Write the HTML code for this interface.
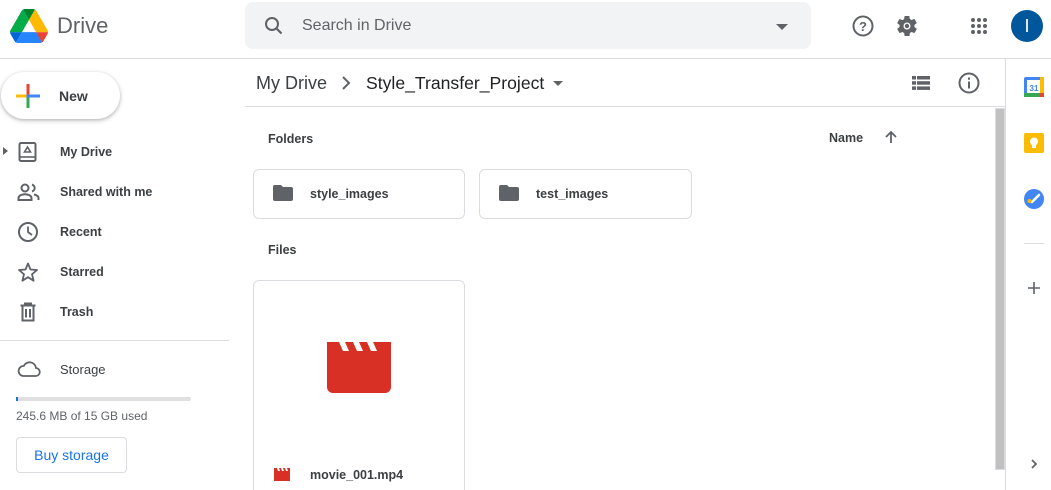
<!DOCTYPE html>
<html><head><meta charset="utf-8"><style>
*{box-sizing:border-box;margin:0;padding:0}
html,body{width:1051px;height:490px;overflow:hidden}
body{background:#fff;font-family:"Liberation Sans",Arial,sans-serif;color:#3c4043;position:relative}
.a{position:absolute}
.nav{position:absolute;left:60px;font-size:12.5px;font-weight:bold;color:#3c4043}
.ic{position:absolute;left:17px}
.card{position:absolute;border:1px solid #dadce0;border-radius:6px;background:#fff}
.b{font-size:12.5px;font-weight:bold;color:#3c4043}
</style></head><body>
<svg class="a" style="left:10px;top:9px" width="38" height="34" viewBox="0 0 87.3 78"><path d="M6.6 66.85l3.85 6.65c.8 1.4 1.950 2.5 3.3 3.3L27.5 53H0c0 1.55.4 3.1 1.2 4.5z" fill="#0066da"/><path d="M43.65 25L29.9 1.2c-1.35.8-2.5 1.9-3.3 3.3l-25.4 44A9.06 9.06 0 000 53h27.5z" fill="#00ac47"/><path d="M73.55 76.8c1.35-.8 2.5-1.9 3.3-3.3l1.6-2.75 7.650-13.25c.8-1.4 1.2-2.95 1.2-4.5H59.8l5.85 11.5z" fill="#ea4335"/><path d="M43.65 25L57.4 1.2C56.05.4 54.5 0 52.9 0H34.4c-1.6 0-3.15.45-4.5 1.2z" fill="#00832d"/><path d="M59.8 53H27.5L13.75 76.8c1.35.8 2.9 1.2 4.5 1.2h50.8c1.6 0 3.15-.45 4.5-1.2z" fill="#2684fc"/><path d="M73.4 26.5l-12.7-22c-.8-1.4-1.95-2.5-3.3-3.3L43.65 25 59.8 53h27.45c0-1.55-.4-3.1-1.2-4.5z" fill="#ffba00"/></svg>
<div class="a" style="left:57px;top:13px;font-size:22px;color:#5f6368">Drive</div>
<div class="a" style="left:245px;top:2px;width:566px;height:47px;background:#f1f3f4;border-radius:8px"></div>
<svg class="a" style="left:262px;top:14px" width="24" height="24" viewBox="0 0 24 24"><circle cx="10" cy="10" r="6" fill="none" stroke="#5f6368" stroke-width="2"/><path d="M14.5 14.5l5 5" stroke="#5f6368" stroke-width="2.2"/></svg>
<div class="a" style="left:302px;top:17px;font-size:16px;color:#5f6368">Search in Drive</div>
<div class="a" style="left:776px;top:24px;border-left:6px solid transparent;border-right:6px solid transparent;border-top:6px solid #5f6368"></div>
<svg class="a" style="left:851px;top:14px" width="24" height="24" viewBox="0 0 24 24"><circle cx="12" cy="12" r="9.5" fill="none" stroke="#5f6368" stroke-width="2"/><text x="12" y="17" font-size="13" font-weight="bold" text-anchor="middle" fill="#5f6368" font-family="Liberation Sans">?</text></svg>
<svg class="a" style="left:895px;top:14px" width="24" height="24" viewBox="0 0 24 24"><path fill="#5f6368" d="M19.4 13c.04-.3.06-.6.06-1s-.02-.7-.06-1l2.1-1.65a.5.5 0 00.12-.64l-2-3.46a.5.5 0 00-.6-.22l-2.5 1a7.3 7.3 0 00-1.7-1l-.37-2.65A.5.5 0 0014 2h-4a.5.5 0 00-.5.42l-.37 2.65c-.6.25-1.17.6-1.7 1l-2.5-1a.5.5 0 00-.6.22l-2 3.46a.5.5 0 00.12.64L4.56 11c-.04.3-.06.66-.06 1s.02.7.06 1l-2.1 1.65a.5.5 0 00-.12.64l2 3.46c.12.22.38.3.6.22l2.5-1c.52.4 1.08.73 1.7 1l.37 2.65c.04.24.25.42.5.42h4c.25 0 .46-.18.5-.42l.37-2.65c.6-.25 1.17-.6 1.7-1l2.5 1c.22.08.48 0 .6-.22l2-3.46a.5.5 0 00-.12-.64zM12 15.5a3.5 3.5 0 110-7 3.5 3.5 0 010 7z"/><circle cx="12" cy="12" r="2.2" fill="#5f6368"/></svg>
<svg class="a" style="left:969px;top:16px" width="20" height="20" viewBox="0 0 20 20" fill="#5f6368"><circle cx="4" cy="4" r="2"/><circle cx="10" cy="4" r="2"/><circle cx="16" cy="4" r="2"/><circle cx="4" cy="10" r="2"/><circle cx="10" cy="10" r="2"/><circle cx="16" cy="10" r="2"/><circle cx="4" cy="16" r="2"/><circle cx="10" cy="16" r="2"/><circle cx="16" cy="16" r="2"/></svg>
<div class="a" style="left:1011px;top:10px;width:32px;height:32px;border-radius:50%;background:#01579b;color:#fff;font-size:18px;text-align:center;line-height:32px">I</div>
<div class="a" style="left:0;top:58px;width:1051px;height:1px;background:#dadce0"></div>
<div class="a" style="left:1px;top:72px;width:119px;height:47px;border-radius:24px;background:#fff;box-shadow:0 1px 3px rgba(60,64,67,.3),0 2px 6px rgba(60,64,67,.15)"></div>
<svg class="a" style="left:16px;top:84px" width="24" height="24" viewBox="0 0 24 24"><rect x="10.5" y="0" width="3" height="10.5" fill="#ea4335"/><rect x="13.5" y="10.5" width="10.5" height="3" fill="#4285f4"/><rect x="10.5" y="13.5" width="3" height="10.5" fill="#34a853"/><rect x="0" y="10.5" width="10.5" height="3" fill="#fbbc04"/><rect x="10.5" y="10.5" width="3" height="3" fill="#4285f4"/></svg>
<div class="a" style="left:59px;top:88px;font-size:14px;font-weight:bold;color:#3c4043">New</div>
<div class="a" style="left:3px;top:147px;border-top:4px solid transparent;border-bottom:4px solid transparent;border-left:5px solid #5f6368"></div>
<svg class="ic" style="top:141px" width="22" height="22" viewBox="0 0 22 22"><rect x="2.5" y="2" width="16" height="18" rx="1.5" fill="none" stroke="#5f6368" stroke-width="2"/><path d="M3 16h15" stroke="#5f6368" stroke-width="1.6"/><path d="M10.5 6l3 5h-6z" fill="none" stroke="#5f6368" stroke-width="1.6"/></svg>
<div class="nav" style="top:145px">My Drive</div>
<svg class="ic" style="top:181px" width="24" height="22" viewBox="0 0 24 22"><circle cx="8" cy="7" r="3.5" fill="none" stroke="#5f6368" stroke-width="2"/><path d="M1.5 19v-2c0-2.5 4-3.8 6.5-3.8s6.5 1.3 6.5 3.8v2z" fill="none" stroke="#5f6368" stroke-width="2"/><path d="M15 3.6a3.5 3.5 0 010 6.8M17 13.5c2 .5 4.5 1.5 4.5 3.5v2" fill="none" stroke="#5f6368" stroke-width="2"/></svg>
<div class="nav" style="top:185px">Shared with me</div>
<svg class="ic" style="top:221px" width="22" height="22" viewBox="0 0 22 22"><circle cx="11" cy="11" r="9" fill="none" stroke="#5f6368" stroke-width="2"/><path d="M11 5.5V11l4 3" fill="none" stroke="#5f6368" stroke-width="1.8"/></svg>
<div class="nav" style="top:225px">Recent</div>
<svg class="ic" style="top:261px" width="22" height="22" viewBox="0 0 22 22"><path d="M11 2.5l2.5 6 6.5.5-5 4.3 1.6 6.4L11 16.2l-5.6 3.5L7 13.3 2 9l6.5-.5z" fill="none" stroke="#5f6368" stroke-width="1.8" stroke-linejoin="round"/></svg>
<div class="nav" style="top:265px">Starred</div>
<svg class="ic" style="top:301px" width="22" height="22" viewBox="0 0 22 22"><path d="M3.5 4.5h15M8 4.5V2.5h6v2M5.5 4.5v15h11v-15M9 8v8.5M13 8v8.5" fill="none" stroke="#5f6368" stroke-width="2"/></svg>
<div class="nav" style="top:305px">Trash</div>
<div class="a" style="left:0;top:340px;width:229px;height:1px;background:#dadce0"></div>
<svg class="ic" style="top:358px" width="24" height="22" viewBox="0 0 24 22"><path d="M6.5 18h12a4 4 0 00.5-8 6.5 6.5 0 00-12.3-2A5 5 0 006.5 18z" fill="none" stroke="#5f6368" stroke-width="1.8"/></svg>
<div class="a" style="left:60px;top:362px;font-size:13px;color:#3c4043">Storage</div>
<div class="a" style="left:16px;top:397px;width:175px;height:4px;background:#e0e0e0;border-radius:2px"></div>
<div class="a" style="left:16px;top:397px;width:2px;height:4px;background:#1a73e8"></div>
<div class="a" style="left:16px;top:409px;font-size:12px;color:#5f6368">245.6 MB of 15 GB used</div>
<div class="a" style="left:16px;top:437px;width:111px;height:36px;border:1px solid #dadce0;border-radius:4px;color:#1a73e8;font-size:14px;text-align:center;line-height:34px">Buy storage</div>
<div class="a" style="left:256px;top:73px;font-size:18px;color:#3c4043">My Drive</div>
<svg class="a" style="left:338px;top:74px" width="16" height="18" viewBox="0 0 16 18"><path d="M5 3l6 6-6 6" fill="none" stroke="#5f6368" stroke-width="2"/></svg>
<div class="a" style="left:366px;top:73px;font-size:17.6px;color:#202124">Style_Transfer_Project</div>
<div class="a" style="left:553px;top:81px;border-left:5px solid transparent;border-right:5px solid transparent;border-top:5px solid #5f6368"></div>
<svg class="a" style="left:911px;top:74px" width="20" height="18" viewBox="0 0 20 18" fill="#5f6368"><rect x="1" y="2" width="18" height="3.5"/><rect x="1" y="7.2" width="18" height="3.5"/><rect x="1" y="12.4" width="18" height="3.5"/><rect x="5" y="2" width="1" height="14" fill="#fff"/></svg>
<svg class="a" style="left:957px;top:71px" width="24" height="24" viewBox="0 0 24 24"><circle cx="12" cy="12" r="9.5" fill="none" stroke="#5f6368" stroke-width="2"/><rect x="11" y="10.5" width="2" height="7" fill="#5f6368"/><rect x="11" y="6.5" width="2" height="2.2" fill="#5f6368"/></svg>
<div class="a" style="left:245px;top:106px;width:760px;height:1px;background:#dadce0"></div>
<div class="a" style="left:1005px;top:58px;width:1px;height:432px;background:#dadce0"></div>
<div class="a" style="left:995px;top:108px;width:10px;height:362px;background:#c1c1c1;border:1px solid #dadce0"></div>
<div class="a b" style="left:268px;top:132px">Folders</div>
<div class="a b" style="left:829px;top:131px">Name</div>
<svg class="a" style="left:883px;top:129px" width="16" height="16" viewBox="0 0 16 16"><path d="M8 14V3M3 8l5-5 5 5" fill="none" stroke="#5f6368" stroke-width="1.8"/></svg>
<div class="card" style="left:253px;top:169px;width:212px;height:50px"></div>
<svg class="a" style="left:273px;top:185px" width="20" height="16" viewBox="0 0 20 16"><path d="M0 2a2 2 0 012-2h6l2 2h8a2 2 0 012 2v10a2 2 0 01-2 2H2a2 2 0 01-2-2z" fill="#5f6368"/></svg>
<div class="a b" style="left:310px;top:187px">style_images</div>
<div class="card" style="left:479px;top:169px;width:213px;height:50px"></div>
<svg class="a" style="left:499px;top:185px" width="20" height="16" viewBox="0 0 20 16"><path d="M0 2a2 2 0 012-2h6l2 2h8a2 2 0 012 2v10a2 2 0 01-2 2H2a2 2 0 01-2-2z" fill="#5f6368"/></svg>
<div class="a b" style="left:536px;top:187px">test_images</div>
<div class="a b" style="left:268px;top:243px">Files</div>
<div class="card" style="left:253px;top:280px;width:212px;height:230px"></div>
<svg class="a" style="left:327px;top:342px" width="64" height="51" viewBox="0 0 64 51"><path d="M0 0h64v45a6 6 0 01-6 6H6a6 6 0 01-6-6z" fill="#d93025"/><path d="M12 0h6l4 9h-6zM26 0h6l4 9h-6zM40 0h6l4 9h-6z" fill="#fff"/></svg>
<svg class="a" style="left:274px;top:468px" width="16" height="13" viewBox="0 0 16 13"><path d="M0 0h16v13H0z" fill="#d93025"/><path d="M3 0h2l1 3H4zM7 0h2l1 3H8zM11 0h2l1 3h-2z" fill="#fff"/></svg>
<div class="a b" style="left:310px;top:468px">movie_001.mp4</div>
<svg class="a" style="left:1024px;top:77px" width="20" height="20" viewBox="0 0 20 20"><rect x="0" y="0" width="20" height="20" rx="2" fill="#4285f4"/><rect x="3" y="3" width="14" height="14" fill="#fff"/><rect x="0" y="16" width="16" height="4" fill="#34a853"/><rect x="16" y="0" width="4" height="16" fill="#fbbc04"/><rect x="16" y="16" width="4" height="4" fill="#ea4335"/><text x="10" y="14" font-size="8" text-anchor="middle" fill="#4285f4" font-family="Liberation Sans" font-weight="bold">31</text></svg>
<svg class="a" style="left:1024px;top:133px" width="20" height="20" viewBox="0 0 20 20"><rect width="20" height="20" rx="2" fill="#fbbc04"/><circle cx="10" cy="8.5" r="4" fill="#fff"/><rect x="8" y="12" width="4" height="3" fill="#fff"/></svg>
<svg class="a" style="left:1024px;top:189px" width="20" height="20" viewBox="0 0 20 20"><circle cx="10" cy="10" r="10" fill="#4285f4"/><path d="M8 13l7-7" stroke="#fff" stroke-width="2.5" stroke-linecap="round"/><circle cx="5.5" cy="12" r="2" fill="#fbbc04"/></svg>
<div class="a" style="left:1024px;top:243px;width:20px;height:1px;background:#dadce0"></div>
<svg class="a" style="left:1027px;top:281px" width="14" height="14" viewBox="0 0 14 14"><path d="M7 1v12M1 7h12" stroke="#5f6368" stroke-width="1.6"/></svg>
<svg class="a" style="left:1029px;top:458px" width="10" height="12" viewBox="0 0 10 12"><path d="M3 2l4 4-4 4" fill="none" stroke="#5f6368" stroke-width="1.8"/></svg>
</body></html>
